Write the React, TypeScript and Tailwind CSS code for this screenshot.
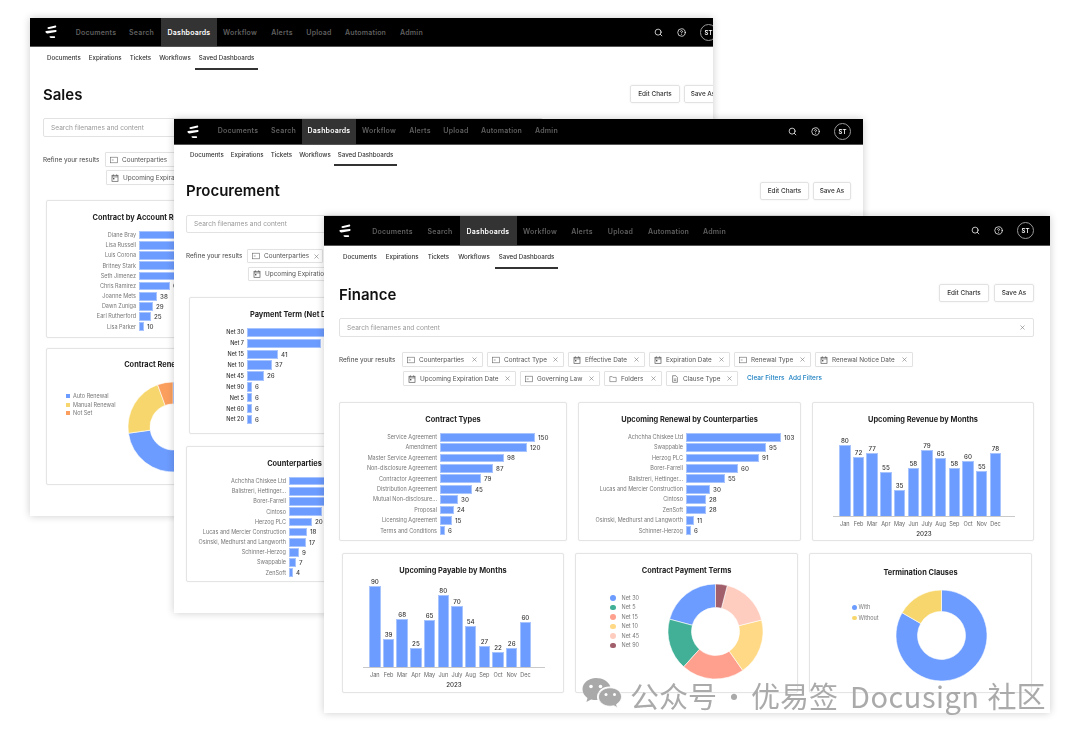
import { Search, CircleHelp, X } from "lucide-react";

type Slice = { from: number; to: number; color: string };
type BarRow = { label: string; value: number; width: number };

const MONTHS = ["Jan", "Feb", "Mar", "Apr", "May", "Jun", "July", "Aug", "Sep", "Oct", "Nov", "Dec"];
const NAV = ["Documents", "Search", "Dashboards", "Workflow", "Alerts", "Upload", "Automation", "Admin"];
const SUBNAV = ["Documents", "Expirations", "Tickets", "Workflows"];

const salesNav = ["w-[52px]", "w-[39px]", "w-[56px]", "w-[46px]", "w-[38px]", "w-[36px]", "w-[57px]", "w-[35px]"];
const procurementNav = ["w-[54px]", "w-[37px]", "w-[54px]", "w-[46px]", "w-[36px]", "w-[36px]", "w-[55px]", "w-[35px]"];
const financeNav = ["w-[56px]", "w-[39px]", "w-[57px]", "w-[47px]", "w-[37px]", "w-[40px]", "w-[56px]", "w-[36px]"];

const contractTypes: BarRow[] = [
  { label: "Service Agreement", value: 150, width: 95 },
  { label: "Amendment", value: 120, width: 87 },
  { label: "Master Service Agreement", value: 98, width: 64 },
  { label: "Non-disclosure Agreement", value: 87, width: 53 },
  { label: "Contractor Agreement", value: 79, width: 41 },
  { label: "Distribution Agreement", value: 45, width: 32 },
  { label: "Mutual Non-disclosure...", value: 30, width: 18 },
  { label: "Proposal", value: 24, width: 14 },
  { label: "Licensing Agreement", value: 15, width: 12 },
  { label: "Terms and Conditions", value: 6, width: 5 },
];

const renewals: BarRow[] = [
  { label: "Achchha Chiskee Ltd", value: 103, width: 95 },
  { label: "Swappable", value: 95, width: 80 },
  { label: "Herzog PLC", value: 91, width: 73 },
  { label: "Borer-Farrell", value: 60, width: 52 },
  { label: "Balistreri, Hettinger...", value: 55, width: 39 },
  { label: "Lucas and Mercier Construction", value: 30, width: 24 },
  { label: "Cintoso", value: 28, width: 20 },
  { label: "ZenSoft", value: 28, width: 20 },
  { label: "Osinski, Medhurst and Langworth", value: 11, width: 8 },
  { label: "Schinner-Herzog", value: 6, width: 5 },
];

const accountReps: BarRow[] = [
  { label: "Diane Bray", value: 90, width: 80 },
  { label: "Lisa Russell", value: 85, width: 70 },
  { label: "Luis Corona", value: 80, width: 62 },
  { label: "Britney Stark", value: 75, width: 55 },
  { label: "Seth Jimenez", value: 70, width: 45 },
  { label: "Chris Ramirez", value: 61, width: 31 },
  { label: "Joanne Mets", value: 38, width: 18 },
  { label: "Dawn Zuniga", value: 29, width: 14 },
  { label: "Earl Rutherford", value: 25, width: 12 },
  { label: "Lisa Parker", value: 10, width: 5 },
];

const paymentTerms: BarRow[] = [
  { label: "Net 30", value: 50, width: 90 },
  { label: "Net 7", value: 45, width: 74 },
  { label: "Net 15", value: 41, width: 31 },
  { label: "Net 10", value: 37, width: 25 },
  { label: "Net 45", value: 26, width: 17 },
  { label: "Net 90", value: 6, width: 5 },
  { label: "Net 5", value: 6, width: 5 },
  { label: "Net 60", value: 6, width: 5 },
  { label: "Net 20", value: 6, width: 5 },
];

const counterparties: BarRow[] = [
  { label: "Achchha Chiskee Ltd", value: 40, width: 60 },
  { label: "Balistreri, Hettinger...", value: 36, width: 52 },
  { label: "Borer-Farrell", value: 34, width: 45 },
  { label: "Cintoso", value: 30, width: 33 },
  { label: "Herzog PLC", value: 20, width: 23 },
  { label: "Lucas and Mercier Construction", value: 18, width: 18 },
  { label: "Osinski, Medhurst and Langworth", value: 17, width: 17 },
  { label: "Schinner-Herzog", value: 9, width: 10 },
  { label: "Swappable", value: 7, width: 7 },
  { label: "ZenSoft", value: 4, width: 4 },
];

const revenue = [
  [80, 71], [72, 59], [77, 63], [55, 44], [35, 26], [58, 48],
  [79, 66], [65, 58], [58, 48], [60, 55], [55, 45], [78, 63],
];
const payable = [
  [90, 81], [39, 28], [68, 48], [25, 19], [65, 47], [80, 72],
  [70, 61], [54, 41], [27, 21], [22, 15], [26, 19], [60, 45],
];

function Logo() {
  return (
    <svg className="w-[12px] h-[14px] text-white" viewBox="0 0 12 14" fill="currentColor">
      <path d="M3 2.2 10.4.6c.9-.2 1.2 1.6.3 1.9L4 3.9C2.6 4.2 1.8 2.5 3 2.2z" />
      <path d="M1 6.1 10.6 5c1.2-.1 1.2 1.8.2 2L2.5 8.5C.8 8.7-.3 6.4 1 6.1z" />
      <path d="M5 11.2h4.4c1 0 1 1.8 0 1.8H6.2C4.8 13 3.9 11.2 5 11.2z" />
    </svg>
  );
}

function TopNav({ widths, inner, height, logoArea, textClass = "" }: { widths: string[]; inner: string; height: string; logoArea: string; textClass?: string }) {
  return (
    <div className={`bg-black ${height} border-b border-[#555]`}>
      <div className={`flex items-stretch h-full pr-4 ${inner}`}>
        <div className={`flex items-center pl-[15px] shrink-0 ${logoArea}`}>
          <Logo />
        </div>
        {NAV.map((item, i) => (
          <div
            key={item}
            className={`flex items-center justify-center shrink-0 text-[7px] font-semibold tracking-[0.2px] ${textClass} ${widths[i]} ${
              item === "Dashboards" ? "bg-[#333] text-white" : "text-[#5f5f5f]"
            }`}
          >
            {item}
          </div>
        ))}
        <div className="ml-auto flex items-center gap-[14px] text-white">
          <Search className="w-[9px] h-[9px]" strokeWidth={2} />
          <CircleHelp className="w-[9px] h-[9px]" strokeWidth={2} />
          <div className="w-[17px] h-[17px] rounded-full border border-[#999] flex items-center justify-center text-[6px] font-semibold shrink-0">
            ST
          </div>
        </div>
      </div>
    </div>
  );
}

function SubNav({ className }: { className: string }) {
  return (
    <div className={`flex items-stretch text-[#333] text-[6.2px] font-medium ${className}`}>
      {SUBNAV.map((item) => (
        <div key={item} className="flex items-center pb-px">
          {item}
        </div>
      ))}
      <div className="flex items-center px-[4px] -ml-[4px] border-b-2 border-[#333] pt-px">Saved Dashboards</div>
    </div>
  );
}

function PageHeader({ title, className, titleClass = "pt-[4px]", editClass, saveClass }: { title: string; className: string; titleClass?: string; editClass: string; saveClass: string }) {
  return (
    <div className={`flex items-center h-[18px] ${className}`}>
      <h1 className={`text-[15px] font-semibold text-[#111] ${titleClass}`}>{title}</h1>
      <button className={`ml-auto h-full pt-[2px] border border-[#e2e2e2] rounded-[2px] shadow-[0_0_2px_rgba(0,0,0,0.08)] text-[6.4px] font-medium text-[#333] ${editClass}`}>
        Edit Charts
      </button>
      <button className={`h-full pt-[2px] border border-[#e2e2e2] rounded-[2px] shadow-[0_0_2px_rgba(0,0,0,0.08)] text-[6.4px] font-medium text-[#333] ${saveClass}`}>
        Save As
      </button>
    </div>
  );
}

function SearchBar({ className }: { className: string }) {
  return (
    <div className={`flex items-center border border-[#e2e2e2] rounded-[2px] px-[7px] text-[6.6px] text-[#999] ${className}`}>
      <span className="pt-[2px]">Search filenames and content</span>
      <X className="ml-auto w-[7px] h-[7px] text-[#777]" />
    </div>
  );
}

function FieldIcon({ kind }: { kind: string }) {
  if (kind === "date") {
    return (
      <svg className="w-[8px] h-[8px] shrink-0 text-[#555]" viewBox="0 0 8 8" fill="none" stroke="currentColor" strokeWidth="0.7">
        <rect x="1" y="1.3" width="6" height="6" />
        <path d="M1 2.9h6M2.4.4v1.4M5.6.4v1.4" />
        <rect x="2" y="4" width="1.4" height="1.4" fill="currentColor" stroke="none" />
      </svg>
    );
  }
  if (kind === "folder") {
    return (
      <svg className="w-[8px] h-[8px] shrink-0 text-[#666]" viewBox="0 0 8 8" fill="none" stroke="currentColor" strokeWidth="0.6">
        <path d="M.8 1.6h2.4l.7.8h3.3v4.2H.8z" />
      </svg>
    );
  }
  if (kind === "file") {
    return (
      <svg className="w-[8px] h-[8px] shrink-0 text-[#666]" viewBox="0 0 8 8" fill="none" stroke="currentColor" strokeWidth="0.7">
        <path d="M1.600.7h3.200l1.600 1.600v5H1.600zM2.800 4h2.400M2.800 5.400h2.400" />
      </svg>
    );
  }
  return (
    <svg className="w-[8px] h-[8px] shrink-0 text-[#666]" viewBox="0 0 8 8" fill="none" stroke="currentColor" strokeWidth="0.6">
      <rect x=".6" y="1.2" width="6.8" height="5.6" />
      <path d="M1.8 4h1.8" />
    </svg>
  );
}

function Chip({ label, kind, width, height }: { label: string; kind: string; width: string; height: string }) {
  return (
    <div className={`flex items-center gap-[4px] px-[4px] border border-[#e2e2e2] rounded-[1px] shadow-[0_0_1px_rgba(0,0,0,0.06)] text-[6.4px] text-[#555] shrink-0 ${width} ${height}`}>
      <FieldIcon kind={kind} />
      <span className="whitespace-nowrap pt-[2px]">{label}</span>
      <X className="ml-auto w-[7px] h-[7px] shrink-0 text-[#777]" />
    </div>
  );
}

function Card({ title, className, titleClass = "pt-[12px]", children }: { title: string; className: string; titleClass?: string; children: React.ReactNode }) {
  return (
    <div className={`shrink-0 border border-[#e4e4e4] rounded-[2px] shadow-[0_0_2px_rgba(0,0,0,0.06)] bg-white ${className}`}>
      <h3 className={`text-center text-[7.4px] leading-[10px] font-bold text-[#222] whitespace-nowrap ${titleClass}`}>{title}</h3>
      {children}
    </div>
  );
}

function HBars({ rows, labelClass, rowClass, dark = false }: { rows: BarRow[]; labelClass: string; rowClass: string; dark?: boolean }) {
  return (
    <div className="mt-[7px]">
      {rows.map((row) => (
        <div key={row.label} className={`flex items-center ${rowClass}`}>
          <div className={`text-right text-[5.5px] whitespace-nowrap shrink-0 ${labelClass} ${dark ? "text-[#333] font-medium" : "text-[#777]"}`}>
            {row.label}
          </div>
          <div
            className="ml-[3px] h-[85%] bg-[#6c9cff] border border-[#a8c4ff] shrink-0"
            style={{ width: row.width }}
          />
          <span className="ml-[3px] text-[6.2px] font-medium text-[#444]">{row.value}</span>
        </div>
      ))}
    </div>
  );
}

function Columns({ data }: { data: number[][] }) {
  return (
    <div>
      <div className="ml-[20px] w-[182px] h-[92px] pl-[5px] flex items-end border-b border-[#c9c9c9]">
        {data.map(([value, height], i) => (
          <div key={i} className="w-[13.7px] flex flex-col items-center shrink-0">
            <span className="text-[6.2px] leading-[8px] font-medium text-[#333]">{value}</span>
            <div className="w-[11.5px] bg-[#6c9cff] border border-[#a8c4ff] border-b-0" style={{ height }} />
          </div>
        ))}
      </div>
      <div className="ml-[20px] pl-[5px] flex mt-[3px]">
        {MONTHS.map((m) => (
          <span key={m} className="w-[13.7px] shrink-0 text-center text-[5.6px] leading-[8px] text-[#666]">
            {m}
          </span>
        ))}
      </div>
      <div className="ml-[20px] w-[182px] text-center text-[6.2px] leading-[8px] mt-[2px] font-medium text-[#333]">2023</div>
    </div>
  );
}

function arcPath(cx: number, cy: number, r: number, inner: number, from: number, to: number) {
  const pt = (rad: number, deg: number) => {
    const a = ((deg - 90) * Math.PI) / 180;
    return `${(cx + rad * Math.cos(a)).toFixed(2)} ${(cy + rad * Math.sin(a)).toFixed(2)}`;
  };
  const large = to - from > 180 ? 1 : 0;
  return `M${pt(r, from)}A${r} ${r} 0 ${large} 1 ${pt(r, to)}L${pt(inner, to)}A${inner} ${inner} 0 ${large} 0 ${pt(inner, from)}Z`;
}

function Donut({ r, inner, slices, className }: { r: number; inner: number; slices: Slice[]; className: string }) {
  const size = r * 2;
  return (
    <svg className={`shrink-0 ${className}`} width={size} height={size} viewBox={`0 0 ${size} ${size}`}>
      {slices.map((s) => (
        <path key={s.from} d={arcPath(r, r, r, inner, s.from, s.to)} fill={s.color} stroke="#fff" strokeWidth="0.6" />
      ))}
    </svg>
  );
}

function Legend({ items, className, rowClass, dotClass }: { items: [string, string][]; className: string; rowClass: string; dotClass: string }) {
  return (
    <div className={`shrink-0 ${className}`}>
      {items.map(([label, color]) => (
        <div key={label} className={`flex items-center ${rowClass}`}>
          <span className={`shrink-0 ${dotClass}`} style={{ backgroundColor: color }} />
          <span className="text-[5.5px] text-[#777] whitespace-nowrap">{label}</span>
        </div>
      ))}
    </div>
  );
}

function Window({ className, children }: { className: string; children: React.ReactNode }) {
  return (
    <section className={`absolute bg-white overflow-hidden shadow-[0_0_8px_rgba(0,0,0,0.2)] ${className}`}>
      {children}
    </section>
  );
}

function SalesWindow() {
  return (
    <Window className="left-[30px] top-[18px] w-[683px] h-[498px]">
      <TopNav widths={salesNav} inner="w-[703px]" height="h-[29px]" logoArea="w-[40px]" textClass="pt-[3px]" />
      <SubNav className="ml-[17px] h-[23px] gap-[8px]" />
      <div className="pl-[13px]">
        <PageHeader title="Sales" titleClass="pt-[2px]" className="mt-[15px] w-[679px]" editClass="w-[50px]" saveClass="w-[38px] ml-[4px]" />
        <SearchBar className="mt-[15px] h-[19px] w-[500px]" />
        <div className="mt-[15px] flex">
          <span className="w-[62px] text-[6.4px] leading-[16px] text-[#444] shrink-0">Refine your results</span>
          <div className="flex flex-col gap-[3px]">
            <Chip label="Counterparties" kind="text" width="w-[80px]" height="h-[15px]" />
            <Chip label="Upcoming Expiration Date" kind="date" width="w-[113px] ml-px" height="h-[15px]" />
          </div>
        </div>
        <div className="ml-[3px] mt-[15px]">
          <Card title="Contract by Account Representative" className="w-[224px] h-[138px]">
            <HBars rows={accountReps} labelClass="w-[89px]" rowClass="h-[10.2px]" />
          </Card>
          <Card title="Contract Renewal Type" titleClass="pt-[11px]" className="w-[240px] h-[137px] mt-[10px]">
            <div className="flex">
              <Legend
                className="ml-[19px] mt-[22px] w-[62px]"
                rowClass="h-[8.5px] gap-[3px]"
                dotClass="w-[4px] h-[4px]"
                items={[["Auto Renewal", "#6c9cff"], ["Manual Renewal", "#f7d76d"], ["Not Set", "#fb9f5f"]]}
              />
              <Donut
                r={45}
                inner={23}
                className="mt-[12px]"
                slices={[
                  { from: 0, to: 262, color: "#6c9cff" },
                  { from: 262, to: 340, color: "#f7d76d" },
                  { from: 340, to: 360, color: "#fb9f5f" },
                ]}
              />
            </div>
          </Card>
        </div>
      </div>
    </Window>
  );
}

function ProcurementWindow() {
  return (
    <Window className="left-[174px] top-[119px] w-[689px] h-[494px]">
      <TopNav widths={procurementNav} inner="w-[693px]" height="h-[26px]" logoArea="w-[37px] !pl-[13px]" />
      <SubNav className="ml-[16px] h-[21px] gap-[7px]" />
      <div className="px-[12px]">
        <PageHeader title="Procurement" titleClass="pt-[1px]" className="mt-[16px]" editClass="w-[49px]" saveClass="w-[38px] ml-[4px]" />
        <SearchBar className="mt-[15px] h-[18px]" />
        <div className="mt-[16px] flex">
          <span className="w-[61px] text-[6.4px] leading-[15px] text-[#444] shrink-0">Refine your results</span>
          <div className="flex flex-col gap-[4px]">
            <Chip label="Counterparties" kind="text" width="w-[76px]" height="h-[14px]" />
            <Chip label="Upcoming Expiration Date" kind="date" width="w-[113px] ml-px" height="h-[14px]" />
          </div>
        </div>
        <Card title="Payment Term (Net Days)" className="ml-[3px] w-[214px] h-[137px] mt-[16px]">
          <HBars rows={paymentTerms} labelClass="w-[54px]" rowClass="h-[10.9px]" dark />
        </Card>
        <Card title="Counterparties" className="w-[217px] h-[136px] mt-[12px]">
          <HBars rows={counterparties} labelClass="w-[99px]" rowClass="h-[10.2px]" />
        </Card>
      </div>
    </Window>
  );
}

function FinanceWindow() {
  return (
    <Window className="left-[324px] top-[216px] w-[726px] h-[497px]">
      <TopNav widths={financeNav} inner="w-[726px]" height="h-[30px]" logoArea="w-[40.5px]" textClass="pt-[3px]" />
      <SubNav className="ml-[19px] h-[23px] gap-[9px]" />
      <div className="pl-[15px] pr-[16px]">
        <PageHeader title="Finance" className="mt-[15px]" editClass="w-[50px]" saveClass="w-[40px] ml-[5px]" />
        <SearchBar className="mt-[16px] h-[19px]" />
        <div className="mt-[15px] flex">
          <span className="w-[63px] text-[6.4px] leading-[16px] text-[#444] shrink-0">Refine your results</span>
          <div className="flex flex-col gap-[4px]">
            <div className="flex gap-[4px]">
              <Chip label="Counterparties" kind="text" width="w-[81px]" height="h-[15px]" />
              <Chip label="Contract Type" kind="text" width="w-[77px]" height="h-[15px]" />
              <Chip label="Effective Date" kind="date" width="w-[77px]" height="h-[15px]" />
              <Chip label="Expiration Date" kind="date" width="w-[81px]" height="h-[15px]" />
              <Chip label="Renewal Type" kind="text" width="w-[77px]" height="h-[15px]" />
              <Chip label="Renewal Notice Date" kind="date" width="w-[98px]" height="h-[15px]" />
            </div>
            <div className="flex gap-[4px] ml-px items-center">
              <Chip label="Upcoming Expiration Date" kind="date" width="w-[113px]" height="h-[15px]" />
              <Chip label="Governing Law" kind="text" width="w-[80px]" height="h-[15px]" />
              <Chip label="Folders" kind="folder" width="w-[58px]" height="h-[15px]" />
              <Chip label="Clause Type" kind="file" width="w-[72px]" height="h-[15px]" />
              <span className="ml-[5px] pt-px text-[6.5px] font-medium text-[#1a7fc1]">Clear Filters</span>
              <span className="pt-px text-[6.5px] font-medium text-[#1a7fc1]">Add Filters</span>
            </div>
          </div>
        </div>
        <div className="mt-[16px] flex gap-[11px]">
          <Card title="Contract Types" className="w-[228px] h-[139px]">
            <HBars rows={contractTypes} labelClass="w-[97px]" rowClass="h-[10.4px]" />
          </Card>
          <Card title="Upcoming Renewal by Counterparties" className="w-[223px] h-[139px]">
            <HBars rows={renewals} labelClass="w-[104px]" rowClass="h-[10.4px]" />
          </Card>
          <Card title="Upcoming Revenue by Months" className="w-[222px] h-[139px]">
            <Columns data={revenue} />
          </Card>
        </div>
        <div className="mt-[12px] ml-[3px] flex gap-[11px]">
          <Card title="Upcoming Payable by Months" className="w-[222px] h-[140px]">
            <Columns data={payable} />
          </Card>
          <Card title="Contract Payment Terms" className="w-[223px] h-[140px]">
            <div className="flex">
              <Legend
                className="ml-[34px] mt-[17px] w-[58px]"
                rowClass="h-[9.5px] gap-[6px]"
                dotClass="w-[5.5px] h-[5.5px] rounded-full"
                items={[["Net 30", "#6c9cff"], ["Net 5", "#41b097"], ["Net 15", "#ff9f8e"], ["Net 10", "#ffd985"], ["Net 45", "#ffcdbf"], ["Net 90", "#a15f6b"]]}
              />
              <Donut
                r={47.5}
                inner={24}
                className="mt-[7.5px]"
                slices={[
                  { from: 285, to: 360, color: "#6c9cff" },
                  { from: 222, to: 285, color: "#41b097" },
                  { from: 145, to: 222, color: "#ff9f8e" },
                  { from: 76, to: 145, color: "#ffd985" },
                  { from: 14.4, to: 76, color: "#ffcdbf" },
                  { from: 0, to: 14.4, color: "#a15f6b" },
                ]}
              />
            </div>
          </Card>
          <Card title="Termination Clauses" titleClass="pt-[14px]" className="w-[223px] h-[140px]">
            <div className="flex">
              <Legend
                className="ml-[42px] mt-[24px] w-[44px]"
                rowClass="h-[10.5px] gap-[2px]"
                dotClass="w-[4.5px] h-[4.5px] rounded-full"
                items={[["With", "#6c9cff"], ["Without", "#f7d76d"]]}
              />
              <Donut
                r={45.5}
                inner={24}
                className="mt-[11.5px]"
                slices={[
                  { from: 0, to: 300, color: "#6c9cff" },
                  { from: 300, to: 360, color: "#f7d76d" },
                ]}
              />
            </div>
          </Card>
        </div>
      </div>
    </Window>
  );
}

function WeChatMark() {
  return (
    <svg className="w-[40px] h-[34px]" viewBox="0 0 40 34" fill="#a9a9a9">
      <path d="M14 0C6.500 0 .5 5 .5 11.200c0 3.600 2 6.700 5 8.800L4.400 24l4.700-2.500c1.500.4 3.200.6 4.900.6.600 0 1 0 1.500-.1-.3-1-.5-2-.5-3 0-5.900 5.500-10.600 12.300-10.600h1C26.300 3.400 20.700 0 14 0z" />
      <path d="M39.500 18.800C39.500 13.300 34.200 9.800 28 9.800s-11.500 4-11.500 9.200S21.800 28.200 28 28.200c1.300 0 2.600-.2 3.800-.5l3.700 2-1-3.300c3-2 5-4.600 5-7.600z" stroke="#fff" strokeWidth="0.8" />
      <circle cx="9" cy="8.500" r="1.800" fill="#fff" />
      <circle cx="18.500" cy="8.500" r="1.800" fill="#fff" />
      <circle cx="24" cy="16.500" r="1.500" fill="#fff" />
      <circle cx="32.500" cy="16.500" r="1.500" fill="#fff" />
    </svg>
  );
}

export default function App() {
  return (
    <div className="relative w-[1080px] h-[739px] bg-white overflow-hidden font-['Inter',sans-serif]">
      <div className="absolute inset-0 blur-[0.35px]">
        <SalesWindow />
        <ProcurementWindow />
        <FinanceWindow />
      </div>
      {/* watermark sits on top of everything */}
      <div className="absolute left-[582px] top-[678px] flex items-center gap-[8px] text-[29px] leading-[34px] text-[#aaaaaa] whitespace-nowrap font-['Noto_Sans_CJK_SC','Noto_Sans',sans-serif]">
        <WeChatMark />
        <span>
          公众号<span className="mx-[-4px]"> · </span>优易签<span className="ml-[5px] mr-[1px] tracking-[0.5px]"> Docusign </span>社区
        </span>
      </div>
    </div>
  );
}
